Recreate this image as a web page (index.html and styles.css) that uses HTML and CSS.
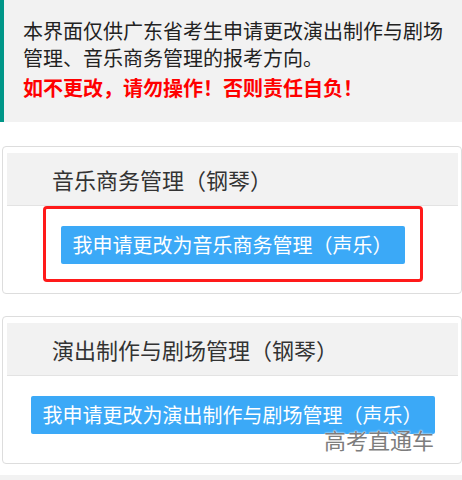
FILE: index.html
```html
<!DOCTYPE html>
<html lang="zh-CN">
<head>
<meta charset="utf-8">
<title>报考方向更改</title>
<link rel="stylesheet" href="styles.css">
</head>
<body>
<div class="notice">
  <p class="notice-text">本界面仅供广东省考生申请更改演出制作与剧场管理、音乐商务管理的报考方向。</p>
  <p class="notice-warn">如不更改，请勿操作！否则责任自负！</p>
</div>

<div class="card card-first">
  <div class="card-head">音乐商务管理（钢琴）</div>
  <div class="card-body">
    <button class="btn">我申请更改为音乐商务管理（声乐）</button>
  </div>
</div>

<div class="card card-second">
  <div class="card-head">演出制作与剧场管理（钢琴）</div>
  <div class="card-body">
    <button class="btn">我申请更改为演出制作与剧场管理（声乐）</button>
  </div>
</div>

<div class="band"></div>

<div class="highlight"></div>
<div class="watermark">高考直通车</div>
</body>
</html>
```

FILE: styles.css
```css
html, body {
  margin: 0;
  padding: 0;
  background: #ffffff;
}

body {
  position: relative;
  width: 462px;
  height: 480px;
  overflow: hidden;
  font-family: "Noto Sans CJK SC", "Noto Sans", sans-serif;
}

.notice {
  box-sizing: border-box;
  height: 122px;
  background: #f2f2f2;
  border-left: 4px solid #009688;
  padding: 17px 10px 0 19px;
}

.notice p {
  margin: 0;
  font-size: 20px;
  line-height: 27px;
}

.notice-text {
  color: #222222;
}

.notice-warn {
  margin-top: 3px !important;
  color: #ff0000;
  font-weight: bold;
}

.card {
  box-sizing: border-box;
  margin-left: 2px;
  border: 1px solid #dddddd;
  border-radius: 4px;
  padding: 6px 3px 6px 4px;
  height: 148px;
}

.card-first {
  margin-top: 24px;
}

.card-second {
  margin-top: 22px;
}

.card-head {
  height: 52px;
  line-height: 52px;
  background: #f2f2f2;
  border-bottom: 1px solid #e3e3e3;
  padding-left: 45px;
  font-size: 22px;
  color: #333333;
}

.card-body {
  display: flex;
  justify-content: center;
  padding-top: 20px;
}

.btn {
  height: 38px;
  padding: 0 12px;
  border: none;
  border-radius: 2px;
  background: #3ba9f7;
  color: #ffffff;
  font-family: inherit;
  font-size: 20px;
  line-height: 38px;
  white-space: nowrap;
}

.band {
  margin-top: 11px;
  height: 20px;
  background: #f2f2f2;
}

.highlight {
  position: absolute;
  left: 43px;
  top: 206px;
  width: 380px;
  height: 76px;
  box-sizing: border-box;
  border: 3px solid #ff1a1a;
  border-radius: 4px;
}

.watermark {
  position: absolute;
  left: 324px;
  top: 425px;
  font-size: 22px;
  line-height: 28px;
  color: #7d7d7d;
  text-shadow: 0 0 2px #ffffff, 0 0 1px #ffffff;
}
```
